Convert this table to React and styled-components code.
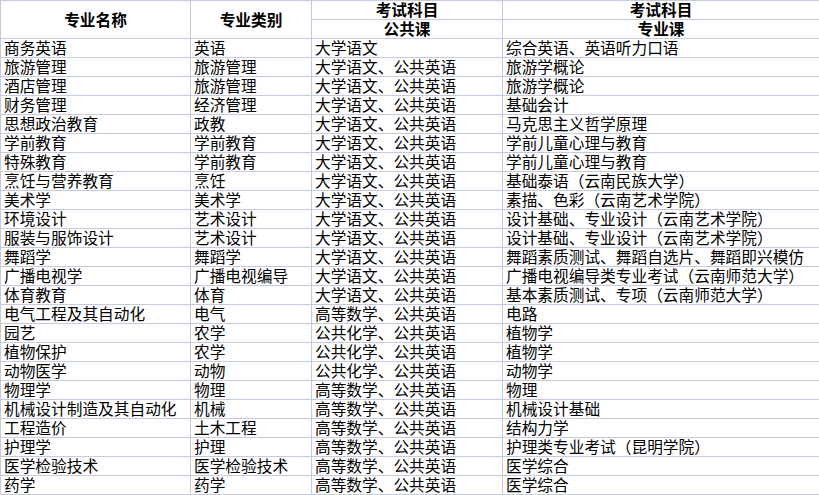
import React from 'react'
import styled, { createGlobalStyle } from 'styled-components'

const GlobalStyle = createGlobalStyle`
  html, body {
    margin: 0;
    padding: 0;
    background: #fff;
  }
  body {
    font-family: 'Noto Sans CJK SC', 'Noto Sans', sans-serif;
    color: #000;
  }
`

const Table = styled.table`
  width: 819px;
  table-layout: fixed;
  border-collapse: collapse;
  font-size: 15.7px;
`
const HeadCell = styled.th`
  border: 1px solid #c5cadf;
  height: 18px;
  padding: 0;
  line-height: 18px;
  font-weight: 700;
  text-align: center;
  vertical-align: middle;
  white-space: nowrap;
  overflow: hidden;
`
const Cell = styled.td`
  border: 1px solid #c5cadf;
  height: 18px;
  padding: 0 0 0 3px;
  line-height: 18px;
  white-space: nowrap;
  overflow: hidden;
`

const rows = [
  ['商务英语', '英语', '大学语文', '综合英语、英语听力口语'],
  ['旅游管理', '旅游管理', '大学语文、公共英语', '旅游学概论'],
  ['酒店管理', '旅游管理', '大学语文、公共英语', '旅游学概论'],
  ['财务管理', '经济管理', '大学语文、公共英语', '基础会计'],
  ['思想政治教育', '政教', '大学语文、公共英语', '马克思主义哲学原理'],
  ['学前教育', '学前教育', '大学语文、公共英语', '学前儿童心理与教育'],
  ['特殊教育', '学前教育', '大学语文、公共英语', '学前儿童心理与教育'],
  ['烹饪与营养教育', '烹饪', '大学语文、公共英语', '基础泰语（云南民族大学）'],
  ['美术学', '美术学', '大学语文、公共英语', '素描、色彩（云南艺术学院）'],
  ['环境设计', '艺术设计', '大学语文、公共英语', '设计基础、专业设计（云南艺术学院）'],
  ['服装与服饰设计', '艺术设计', '大学语文、公共英语', '设计基础、专业设计（云南艺术学院）'],
  ['舞蹈学', '舞蹈学', '大学语文、公共英语', '舞蹈素质测试、舞蹈自选片、舞蹈即兴模仿'],
  ['广播电视学', '广播电视编导', '大学语文、公共英语', '广播电视编导类专业考试（云南师范大学）'],
  ['体育教育', '体育', '大学语文、公共英语', '基本素质测试、专项（云南师范大学）'],
  ['电气工程及其自动化', '电气', '高等数学、公共英语', '电路'],
  ['园艺', '农学', '公共化学、公共英语', '植物学'],
  ['植物保护', '农学', '公共化学、公共英语', '植物学'],
  ['动物医学', '动物', '公共化学、公共英语', '动物学'],
  ['物理学', '物理', '高等数学、公共英语', '物理'],
  ['机械设计制造及其自动化', '机械', '高等数学、公共英语', '机械设计基础'],
  ['工程造价', '土木工程', '高等数学、公共英语', '结构力学'],
  ['护理学', '护理', '高等数学、公共英语', '护理类专业考试（昆明学院）'],
  ['医学检验技术', '医学检验技术', '高等数学、公共英语', '医学综合'],
  ['药学', '药学', '高等数学、公共英语', '医学综合'],
]

const App = () => (
  <>
    <GlobalStyle />
    <Table>
      <colgroup>
        <col style={{ width: 190 }} />
        <col style={{ width: 121 }} />
        <col style={{ width: 191 }} />
        <col style={{ width: 317 }} />
      </colgroup>
      <thead>
        <tr>
          <HeadCell rowSpan={2}>专业名称</HeadCell>
          <HeadCell rowSpan={2}>专业类别</HeadCell>
          <HeadCell>考试科目</HeadCell>
          <HeadCell>考试科目</HeadCell>
        </tr>
        <tr>
          <HeadCell>公共课</HeadCell>
          <HeadCell>专业课</HeadCell>
        </tr>
      </thead>
      <tbody>
        {rows.map(row => (
          <tr key={row[0]}>
            {row.map((text, i) => (
              <Cell key={i}>{text}</Cell>
            ))}
          </tr>
        ))}
      </tbody>
    </Table>
  </>
)

export default App
